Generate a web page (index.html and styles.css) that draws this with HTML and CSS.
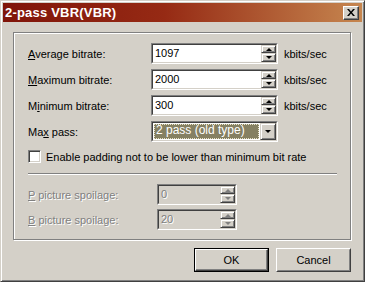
FILE: index.html
```html
<!DOCTYPE html>
<html>
	<head>
		<meta charset="utf-8">
		<title>2-pass VBR(VBR)</title>
		<link rel="stylesheet" href="styles.css">
	</head>
	<body>
		<div class="window">
			<div class="titlebar">
				<span class="title">2-pass VBR(VBR)</span>
				<span class="close">
					<svg width="8" height="7" viewBox="0 0 8 7"><path d="M0 0h2l2 2.5 2-2.5h2l-3 3.5 3 3.5h-2l-2-2.5-2 2.5h-2l3-3.5z" fill="#000"/></svg>
				</span>
			</div>
			<div class="content">
				<div class="group">
					<div class="row">
						<span class="lbl"><u>A</u>verage bitrate:</span>
						<div class="field"><div class="field-in">
							<span class="val">1097</span>
							<span class="arrows"><span class="arr"><i class="up"></i></span><span class="arr"><i class="down"></i></span></span>
						</div></div>
						<span class="unit">kbits/sec</span>
					</div>
					<div class="row">
						<span class="lbl"><u>M</u>aximum bitrate:</span>
						<div class="field"><div class="field-in">
							<span class="val">2000</span>
							<span class="arrows"><span class="arr"><i class="up"></i></span><span class="arr"><i class="down"></i></span></span>
						</div></div>
						<span class="unit">kbits/sec</span>
					</div>
					<div class="row">
						<span class="lbl">M<u>i</u>nimum bitrate:</span>
						<div class="field"><div class="field-in">
							<span class="val">300</span>
							<span class="arrows"><span class="arr"><i class="up"></i></span><span class="arr"><i class="down"></i></span></span>
						</div></div>
						<span class="unit">kbits/sec</span>
					</div>
					<div class="row">
						<span class="lbl">Ma<u>x</u> pass:</span>
						<div class="field"><div class="field-in">
							<span class="sel">2 pass (old type)</span>
							<span class="dd"><i class="down"></i></span>
						</div></div>
					</div>
					<div class="check-row">
						<span class="box"></span>
						<span>Enable padding not to be lower than minimum bit rate</span>
					</div>
					<div class="sep"></div>
					<div class="row row2 off">
						<span class="lbl"><u>P</u> picture spoilage:</span>
						<div class="field"><div class="field-in">
							<span class="val">0</span>
							<span class="arrows"><span class="arr"><i class="up"></i></span><span class="arr"><i class="down"></i></span></span>
						</div></div>
					</div>
					<div class="row row2 off">
						<span class="lbl"><u>B</u> picture spoilage:</span>
						<div class="field"><div class="field-in">
							<span class="val">20</span>
							<span class="arrows"><span class="arr"><i class="up"></i></span><span class="arr"><i class="down"></i></span></span>
						</div></div>
					</div>
				</div>
				<div class="actions">
					<span class="btn default"><span class="btn-in">OK</span></span>
					<span class="btn"><span class="btn-in">Cancel</span></span>
				</div>
			</div>
		</div>
	</body>
</html>
```
FILE: styles.css
```css
* { margin: 0; padding: 0; box-sizing: border-box;}
body { width: 365px; height: 282px; overflow: hidden; background: #d4d0c8; font: 11px "Liberation Sans", Arial, sans-serif; color: #000;}
.window { width: 365px; height: 282px; padding: 2px; display: flex; flex-direction: column; border: 1px solid; border-color: #d4d0c8 #404040 #404040 #d4d0c8; box-shadow: inset 1px 1px #fff, inset -1px -1px #808080;}
.titlebar { height: 19px; display: flex; align-items: center; justify-content: space-between; padding: 0 3px 0 2px; background: linear-gradient(to right, #801409, #962a14 45%, #c6864f);}
.title { color: #fff; font-weight: bold; font-size: 13px; letter-spacing: 0.2px;}
.close { width: 16px; height: 14px; display: flex; align-items: center; justify-content: center; background: #d4d0c8; border: 1px solid; border-color: #fff #404040 #404040 #fff; box-shadow: inset -1px -1px #808080;}
.content { flex: 1; padding: 10px 11px 0 10px;}
.group { height: 208px; padding: 10px 13px 9px 14px; border: 1px solid #808080; box-shadow: inset 1px 1px #fff, 1px 1px #fff;}
.row { display: grid; grid-template-columns: 123px 127px auto; align-items: center; height: 21px; margin-bottom: 5px;}
.row2 { grid-template-columns: 129px 80px; margin-bottom: 4px;}
.unit { padding-left: 6px;}
.field { height: 21px; border: 1px solid; border-color: #808080 #fff #fff #808080;}
.field-in { height: 100%; display: flex; background: #fff; border: 1px solid; border-color: #404040 #d4d0c8 #d4d0c8 #404040;}
.val { flex: 1; padding-left: 2px; line-height: 17px;}
.arrows { width: 15px; display: flex; flex-direction: column;}
.arr, .dd { flex: 1; display: flex; align-items: center; justify-content: center; background: #d4d0c8; border: 1px solid; border-color: #d4d0c8 #404040 #404040 #d4d0c8; box-shadow: inset 1px 1px #fff, inset -1px -1px #808080;}
.arr:first-child { height: 8px; flex: none;}
.up { display: block; border-left: 3px solid transparent; border-right: 3px solid transparent; border-bottom: 3px solid #000;}
.down { display: block; border-left: 3px solid transparent; border-right: 3px solid transparent; border-top: 3px solid #000;}
.sel { flex: 1; margin: 1px; padding-left: 2px; font-size: 12px; line-height: 13px; color: #fff; background: #858062; outline: 1px dotted #e8e4c8; outline-offset: -1px;}
.dd { flex: none; width: 16px;}
.check-row { display: flex; align-items: center; height: 19px;}
.box { width: 13px; height: 13px; margin-right: 5px; background: #fff; border: 1px solid; border-color: #808080 #fff #fff #808080; box-shadow: inset 1px 1px #404040, inset -1px -1px #d4d0c8;}
.sep { height: 2px; margin: 7px 0 9px; border-top: 1px solid #808080; border-bottom: 1px solid #fff;}
.off .lbl, .off .val { color: #808080; text-shadow: 1px 1px #fff;}
.off .field-in { background: #d4d0c8;}
.off .up { border-bottom-color: #808080;}
.off .down { border-top-color: #808080;}
.actions { display: flex; justify-content: flex-end; gap: 7px; margin-top: 8px;}
.btn { width: 75px; height: 24px; display: flex; border: 1px solid; border-color: #fff #404040 #404040 #fff; background: #d4d0c8;}
.btn-in { flex: 1; display: flex; align-items: center; justify-content: center; border: 1px solid; border-color: #d4d0c8 #808080 #808080 #d4d0c8;}
.default { border-color: #000;}
.default .btn-in { border-color: #fff #404040 #404040 #fff; box-shadow: inset -1px -1px #808080;}
```
